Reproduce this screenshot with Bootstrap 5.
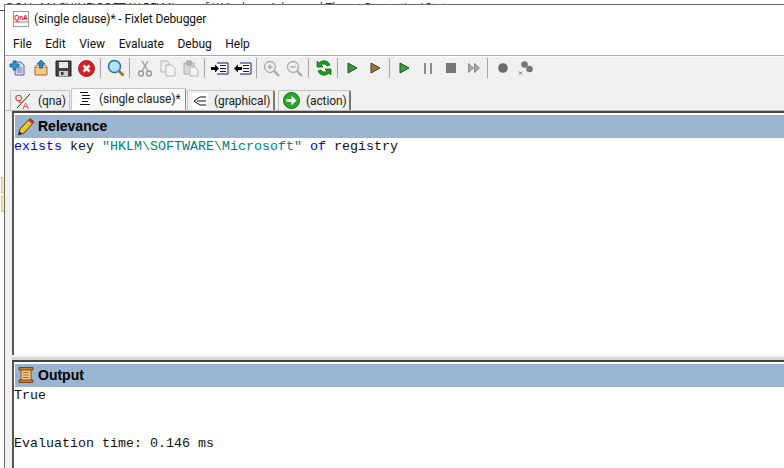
<!DOCTYPE html>
<html lang="en">
<head>
<meta charset="utf-8">
<title>Fixlet Debugger</title>
<link href="https://cdn.jsdelivr.net/npm/bootstrap@5.3.0/dist/css/bootstrap.min.css" rel="stylesheet">
<style>
html,body{height:468px;overflow:hidden;background:#fff}
body{font-family:Roboto,"Open Sans",sans-serif;font-size:12px;letter-spacing:-.1px;color:#111}
.scr{width:784px;height:468px}
.strip{height:4px;overflow:hidden;font:11.7px/14px "Open Sans",sans-serif;letter-spacing:0;color:#333;padding-left:5px;white-space:nowrap}
.gutter{width:4px;flex:none;background:linear-gradient(#fff 6px,#444 6px,#444 7px,#fff 7px)}
.sticky{height:16px;width:3px;margin-left:1px;background:#ffe79a;border:1px solid #e8c95a;border-right:0}
.sticky.one{margin-top:173px;margin-bottom:3px}
.win{border-left:1px solid #6d6d6d;border-top:1px solid #6d6d6d;background:#fff;min-width:0}
.titlebar{height:28px;padding-left:8px;gap:5px}
.menubar{height:23px;border-bottom:1px solid #a9a9a9;padding-left:8px;gap:13.5px;letter-spacing:0}
.toolarea{background:#f0f0f0;border-top:1px solid #fff;height:54px;flex:none}
.tbar{height:22px;padding-left:1px}
.tool{width:23px;height:22px;flex:none}
.tsep{width:1px;height:20px;background:#a8a8a8;margin:0 3px 0 2px;flex:none}
.tabsrow{padding-left:5px;height:31px;border:0;gap:1px;flex-wrap:nowrap;align-items:flex-end}
.tabx{height:20px;background:#f0f0f0;border:1px solid #c4c4c4;border-bottom:0;border-right:2px solid #777;border-radius:2px 2px 0 0;color:#222;padding:0 0 0 4px;gap:7px;white-space:nowrap}
.tabx.on{height:22px;background:#fbfbfb;border-right:1px solid #888;padding-left:5px;gap:6px}
.tq{width:60px;border-right:1px solid #c4c4c4}.ts{width:115px;align-items:flex-start!important;padding-top:1px!important}.tg{width:88px;gap:6px}.ta{width:73px;margin-left:2px;gap:6px}
.pane{border-top:1px solid #bdbdbd;background:#f0f0f0;min-height:0}
.frame{margin-left:7px;border:0;border-left:2px solid #555;border-top:2px solid #444;border-radius:0;background:#fff}
.card-header.phead{height:23px;margin:2px 0 0 1px;padding:0 0 1px 2px;gap:3px;background:#9bb4d0;border:0;border-radius:0;font:bold 14px "Liberation Sans",sans-serif;letter-spacing:0;color:#000}
.pbody{padding:1px 0 0;font:13.33px/16px "Liberation Mono",monospace;letter-spacing:0;color:#111;background:#fff;white-space:pre;flex:none}
.rel{height:217px}
.out{flex:1}
.kw{color:#0000ee}.st{color:#007f7f}
.split{height:5px;background:linear-gradient(#f4f4f4 2px,#d8d8d8 2px);margin-left:7px;flex:none}
</style>
</head>
<body>
<div class="scr d-flex flex-column">
  <div class="strip"><span>OCAL_MACHINE\SOFTWARE\Microsoft\Windows Advanced Threat Protection\Status</span></div>
  <div class="d-flex flex-grow-1" style="min-height:0">
    <div class="gutter d-flex flex-column"><div class="sticky one"></div><div class="sticky"></div></div>
    <div class="win d-flex flex-column flex-grow-1">
      <div class="titlebar d-flex align-items-center">
        <svg width="16" height="16" viewBox="0 0 16 16"><rect x=".5" y=".5" width="15" height="15" fill="#fff" stroke="#999"/><rect x="1" y="10" width="14" height="2" fill="#f3b0b0"/><text x="8" y="8.500" font-size="6.500" font-weight="700" fill="#e01010" text-anchor="middle" font-family="Liberation Sans">QnA</text></svg>
        <span>(single clause)* - Fixlet Debugger</span>
      </div>
      <nav class="menubar d-flex align-items-center"><span>File</span><span>Edit</span><span>View</span><span>Evaluate</span><span>Debug</span><span>Help</span></nav>
      <div class="toolarea d-flex flex-column">
        <div class="tbar d-flex align-items-center" role="toolbar">
          <span class="tool d-flex align-items-center justify-content-center"><svg width="18" height="18" viewBox="0 0 18 18"><path d="M6 3h6l3 3v10H6z" fill="#d5dcf5" stroke="#5560a5"/><path d="M8 9h5M8 11h5M8 13h5" stroke="#6a75b5"/><path d="M1 5h3V2h3v3h3v3H7v3H4V8H1z" fill="#2e9bd8" stroke="#0d5c97" stroke-width=".8"/></svg></span>
          <span class="tool d-flex align-items-center justify-content-center"><svg width="18" height="18" viewBox="0 0 18 18"><path d="M3 8h12v8H3z" fill="#f7c98b" stroke="#a9681d"/><path d="M3 8l2-2h8l2 2" fill="#fbe0b5" stroke="#a9681d"/><path d="M9 1l4 4h-2.500v4h-3V5H5z" fill="#2b86c9" stroke="#0d5c97" stroke-width=".7"/></svg></span>
          <span class="tool d-flex align-items-center justify-content-center"><svg width="17" height="17" viewBox="0 0 17 17"><path d="M1 1h15v15H1z" fill="#444" stroke="#222"/><rect x="4" y="2" width="9" height="6" fill="#e8e8e8"/><rect x="4" y="11" width="9" height="5" fill="#ccc"/><rect x="6" y="12" width="2.500" height="3" fill="#333"/></svg></span>
          <span class="tool d-flex align-items-center justify-content-center"><svg width="17" height="17" viewBox="0 0 17 17"><circle cx="8.500" cy="8.500" r="8" fill="#d81e1e" stroke="#8e1010" stroke-width=".8"/><path d="M5.500 5.500l6 6M11.500 5.500l-6 6" stroke="#fff" stroke-width="2.600"/></svg></span>
          <span class="tsep"></span>
          <span class="tool d-flex align-items-center justify-content-center"><svg width="18" height="18" viewBox="0 0 18 18"><circle cx="7.500" cy="7.500" r="6" fill="#b7e2fa" stroke="#1a72b8" stroke-width="1.500"/><path d="M12 12l4.500 4.500" stroke="#a56a28" stroke-width="2.600"/></svg></span>
          <span class="tsep"></span>
          <span class="tool d-flex align-items-center justify-content-center"><svg width="16" height="17" viewBox="0 0 16 17"><circle cx="4" cy="13.500" r="2.500" fill="none" stroke="#999" stroke-width="1.400"/><circle cx="12" cy="13.500" r="2.500" fill="none" stroke="#999" stroke-width="1.400"/><path d="M5 11L11 1M11 11L5 1" stroke="#aaa" stroke-width="1.500"/></svg></span>
          <span class="tool d-flex align-items-center justify-content-center"><svg width="16" height="17" viewBox="0 0 16 17"><path d="M1 1h6l2 2v9H1z" fill="#eee" stroke="#b5b5b5"/><path d="M6 5h6l3 3v8H6z" fill="#f3f3f3" stroke="#b5b5b5"/></svg></span>
          <span class="tool d-flex align-items-center justify-content-center"><svg width="16" height="17" viewBox="0 0 16 17"><path d="M1 3h10v11H1z" fill="#d8d8d8" stroke="#aaa"/><rect x="4" y="1" width="4" height="4" fill="#bbb" stroke="#999"/><path d="M7 7h5l3 3v6H7z" fill="#f3f3f3" stroke="#b5b5b5"/></svg></span>
          <span class="tsep"></span>
          <span class="tool d-flex align-items-center justify-content-center"><svg width="18" height="13" viewBox="0 0 18 13"><path d="M6 1h11v11H6" fill="#fff" stroke="#10107a"/><path d="M9 3.500h6M9 6.500h6M9 9.500h6" stroke="#10107a"/><path d="M0 5h4V2.500L8 6.500l-4 4V8H0z" fill="#000"/></svg></span>
          <span class="tool d-flex align-items-center justify-content-center"><svg width="18" height="13" viewBox="0 0 18 13"><path d="M6 1h11v11H6" fill="#fff" stroke="#10107a"/><path d="M9 3.500h6M9 6.500h6M9 9.500h6" stroke="#10107a"/><path d="M8 5H4V2.500L0 6.500l4 4V8h4z" fill="#000"/></svg></span>
          <span class="tsep"></span>
          <span class="tool d-flex align-items-center justify-content-center"><svg width="17" height="17" viewBox="0 0 17 17"><circle cx="7" cy="7" r="5.500" fill="#eee" stroke="#aaa" stroke-width="1.300"/><path d="M4.500 7h5M7 4.500v5" stroke="#aaa" stroke-width="1.400"/><path d="M11 11l5 5" stroke="#aaa" stroke-width="2.400"/></svg></span>
          <span class="tool d-flex align-items-center justify-content-center"><svg width="17" height="17" viewBox="0 0 17 17"><circle cx="7" cy="7" r="5.500" fill="#eee" stroke="#aaa" stroke-width="1.300"/><path d="M4.500 7h5" stroke="#aaa" stroke-width="1.400"/><path d="M11 11l5 5" stroke="#aaa" stroke-width="2.400"/></svg></span>
          <span class="tsep"></span>
          <span class="tool d-flex align-items-center justify-content-center"><svg width="18" height="18" viewBox="0 0 18 18"><path d="M15 6A6.500 6.500 0 0 0 4 4L2 2v6h6L6 6a4 4 0 0 1 6 1z" fill="#16a01c" stroke="#0a5e10" stroke-width=".7"/><path d="M3 12a6.500 6.500 0 0 0 11 2l2 2v-6h-6l2 2a4 4 0 0 1-6-1z" fill="#16a01c" stroke="#0a5e10" stroke-width=".7"/></svg></span>
          <span class="tsep"></span>
          <span class="tool d-flex align-items-center justify-content-center"><svg width="11" height="12" viewBox="0 0 11 12"><path d="M1 1l9 5-9 5z" fill="#3f9a3f" stroke="#14561a"/></svg></span>
          <span class="tool d-flex align-items-center justify-content-center"><svg width="11" height="12" viewBox="0 0 11 12"><path d="M1 1l9 5-9 5z" fill="#8a7a4a" stroke="#6b3208"/></svg></span>
          <span class="tsep"></span>
          <span class="tool d-flex align-items-center justify-content-center"><svg width="11" height="12" viewBox="0 0 11 12"><path d="M1 1l9 5-9 5z" fill="#3f9a3f" stroke="#14561a"/></svg></span>
          <span class="tool d-flex align-items-center justify-content-center"><svg width="10" height="11" viewBox="0 0 10 11"><path d="M1 0h2v11H1zM7 0h2v11H7z" fill="#8c8c8c"/></svg></span>
          <span class="tool d-flex align-items-center justify-content-center"><svg width="10" height="10" viewBox="0 0 10 10"><rect width="10" height="10" fill="#777"/></svg></span>
          <span class="tool d-flex align-items-center justify-content-center"><svg width="12" height="10" viewBox="0 0 12 10"><path d="M.5.500l5 4.500-5 4.500zM6.500.500l5 4.500-5 4.500z" fill="#aaa" stroke="#777" stroke-width=".8"/></svg></span>
          <span class="tsep"></span>
          <span class="tool d-flex align-items-center justify-content-center"><svg width="10" height="10" viewBox="0 0 10 10"><circle cx="5" cy="5" r="4.800" fill="#6a6a6a"/></svg></span>
          <span class="tool d-flex align-items-center justify-content-center"><svg width="15" height="15" viewBox="0 0 15 15"><circle cx="6.500" cy="3.500" r="3.300" fill="#777"/><circle cx="11.500" cy="8" r="3.300" fill="#777"/><path d="M1 10.500l3 3M4 10.500l-3 3" stroke="#555" stroke-width=".8"/></svg></span>
        </div>
        <div class="nav tabsrow">
          <div class="tabx tq d-flex align-items-center"><svg width="16" height="16" viewBox="0 0 16 16"><text x="0" y="8" font-size="9.500" fill="#e01010" font-family="Liberation Sans">Q</text><text x="7.500" y="15.500" font-size="9.500" fill="#e01010" font-family="Liberation Sans">A</text><path d="M15 1L2 15" stroke="#222"/></svg><span>(qna)</span></div>
          <div class="tabx on ts d-flex"><svg width="16" height="16" viewBox="0 0 16 16"><rect width="16" height="16" fill="#fff"/><path d="M3 2.500h8M5 5.500h8M5 8.500h8M5 11.500h6M3 14.500h10" stroke="#111"/></svg><span>(single clause)*</span></div>
          <div class="tabx tg d-flex align-items-center"><svg width="16" height="16" viewBox="0 0 16 16"><rect width="16" height="16" fill="#fff"/><path d="M2 8l6-4h6M2 8l6 4h6M5 8h9" fill="none" stroke="#111"/></svg><span>(graphical)</span></div>
          <div class="tabx ta d-flex align-items-center"><svg width="17" height="17" viewBox="0 0 17 17"><circle cx="8.500" cy="8.500" r="8" fill="#2da52d" stroke="#137513"/><path d="M3.500 7h5V3.800l5 4.700-5 4.700V10h-5z" fill="#fff"/></svg><span>(action)</span></div>
        </div>
      </div>
      <div class="pane d-flex flex-column flex-grow-1">
        <div class="frame card">
          <div class="phead card-header d-flex align-items-center"><svg width="18" height="19" viewBox="0 0 18 19"><path d="M3 12L13 1.500l4 3.500L7 16l-5.500 2z" fill="#f2c81e" stroke="#3a2a10" stroke-width=".9"/><path d="M13 1.500l4 3.500-1.800 2-4-3.500z" fill="#d92c2c"/><path d="M1.500 18l.9-3.500 2.600 2z" fill="#222"/></svg><span>Relevance</span></div>
          <div class="pbody rel card-body"><span class="kw">exists</span> key <span class="st">"HKLM\SOFTWARE\Microsoft"</span> <span class="kw">of</span> registry</div>
        </div>
        <div class="split"></div>
        <div class="frame card flex-grow-1">
          <div class="phead card-header d-flex align-items-center"><svg width="18" height="18" viewBox="0 0 18 18"><path d="M4 3h10v12H4z" fill="#f6c98c" stroke="#8a4e12"/><path d="M2 1.500h14v2.500H2zM2 14h14v2.500H2z" fill="#c9822e" stroke="#6b3a0a" stroke-width=".9"/><path d="M6 6.500h6M6 9h6M6 11.500h6" stroke="#a86a24"/></svg><span>Output</span></div>
          <div class="pbody out card-body">True


Evaluation time: 0.146 ms</div>
        </div>
      </div>
    </div>
  </div>
</div>
<script src="https://cdn.jsdelivr.net/npm/bootstrap@5.3.0/dist/js/bootstrap.bundle.min.js"></script>
</body>
</html>
